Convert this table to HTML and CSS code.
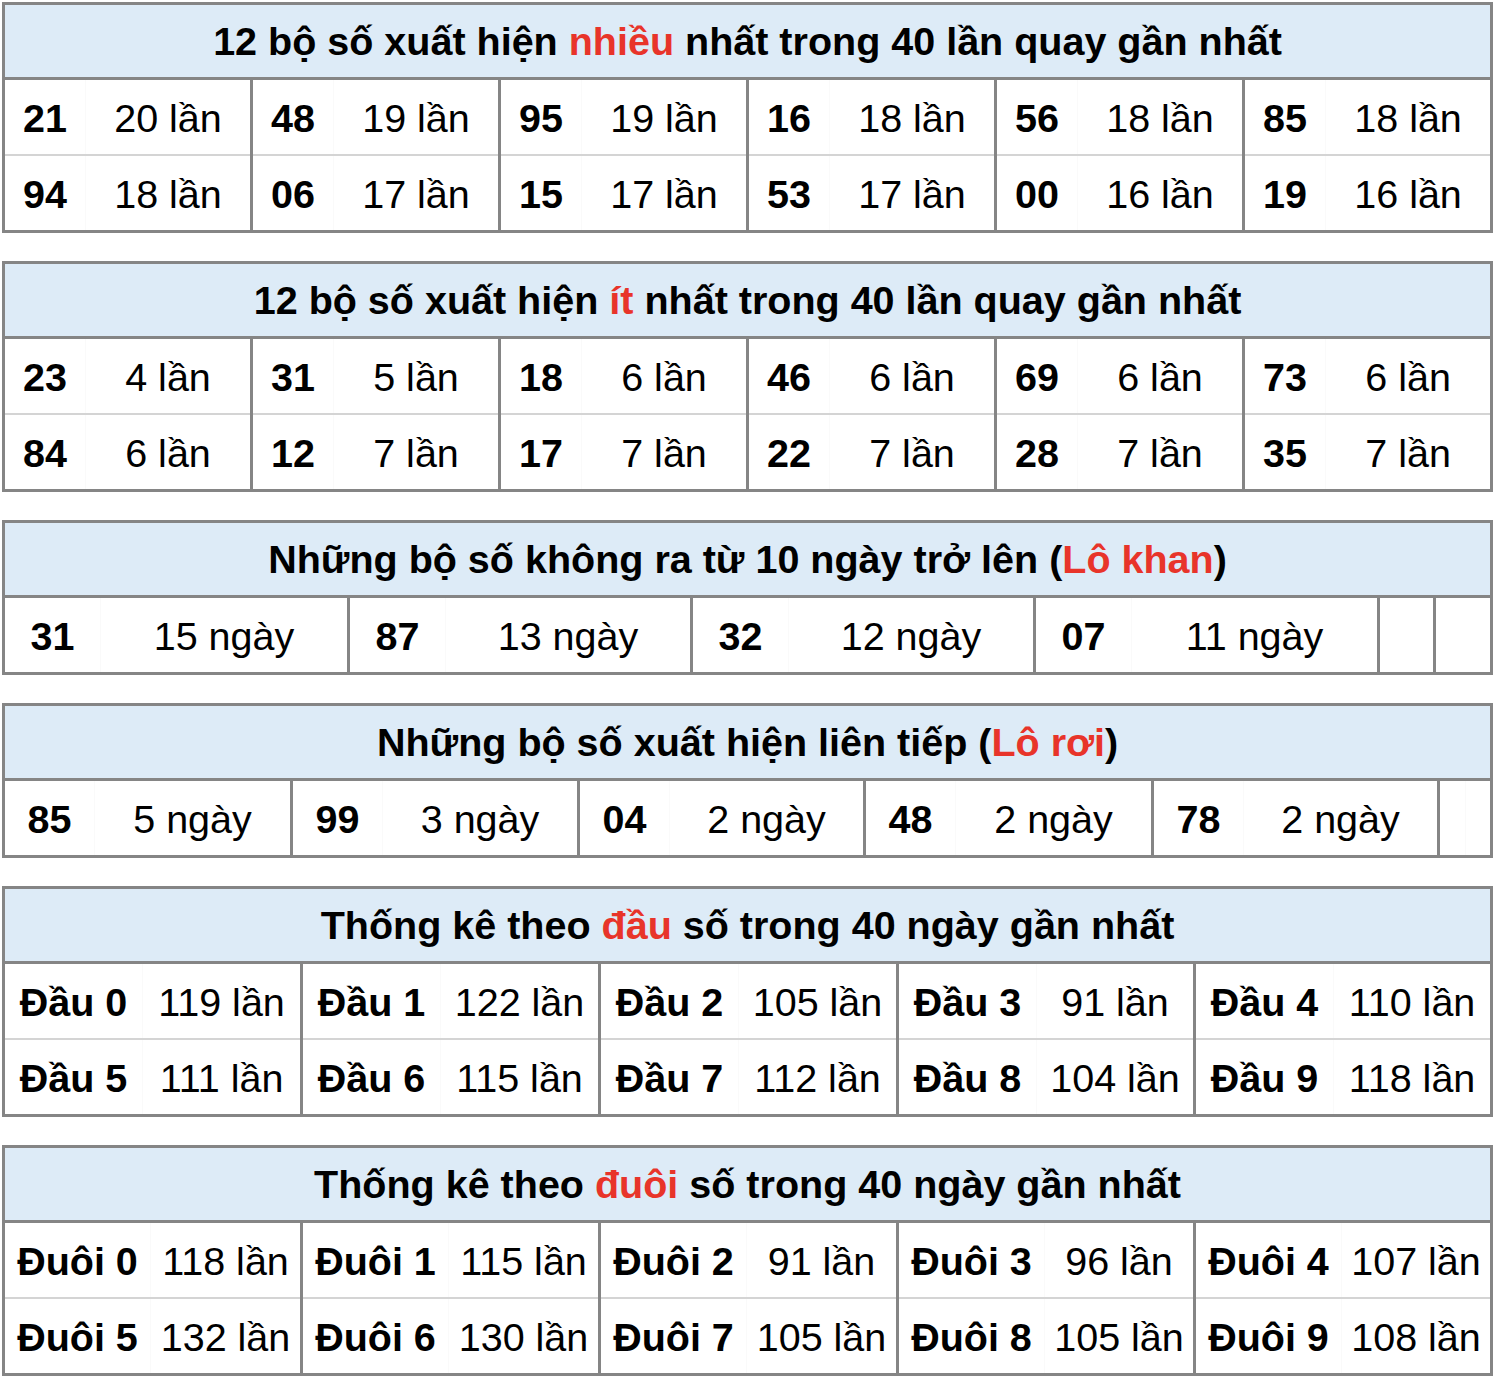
FILE: index.html
```html
<!DOCTYPE html>
<html lang="vi">
<head>
<meta charset="utf-8">
<title>Thống kê</title>
<link rel="stylesheet" href="styles.css">
</head>
<body>
<div class="wrap">

<table class="stat">
  <colgroup>
    <col class="w82"><col class="w166"><col class="w82"><col class="w166"><col class="w82"><col class="w166">
    <col class="w82"><col class="w166"><col class="w82"><col class="w166"><col class="w82"><col class="w166">
  </colgroup>
  <tr><th colspan="12">12 bộ số xuất hiện <span class="red">nhiều</span> nhất trong 40 lần quay gần nhất</th></tr>
  <tr>
    <td class="n">21</td><td class="c">20 lần</td>
    <td class="n">48</td><td class="c">19 lần</td>
    <td class="n">95</td><td class="c">19 lần</td>
    <td class="n">16</td><td class="c">18 lần</td>
    <td class="n">56</td><td class="c">18 lần</td>
    <td class="n">85</td><td class="c">18 lần</td>
  </tr>
  <tr>
    <td class="n">94</td><td class="c">18 lần</td>
    <td class="n">06</td><td class="c">17 lần</td>
    <td class="n">15</td><td class="c">17 lần</td>
    <td class="n">53</td><td class="c">17 lần</td>
    <td class="n">00</td><td class="c">16 lần</td>
    <td class="n">19</td><td class="c">16 lần</td>
  </tr>
</table>

<table class="stat">
  <colgroup>
    <col class="w82"><col class="w166"><col class="w82"><col class="w166"><col class="w82"><col class="w166">
    <col class="w82"><col class="w166"><col class="w82"><col class="w166"><col class="w82"><col class="w166">
  </colgroup>
  <tr><th colspan="12">12 bộ số xuất hiện <span class="red">ít</span> nhất trong 40 lần quay gần nhất</th></tr>
  <tr>
    <td class="n">23</td><td class="c">4 lần</td>
    <td class="n">31</td><td class="c">5 lần</td>
    <td class="n">18</td><td class="c">6 lần</td>
    <td class="n">46</td><td class="c">6 lần</td>
    <td class="n">69</td><td class="c">6 lần</td>
    <td class="n">73</td><td class="c">6 lần</td>
  </tr>
  <tr>
    <td class="n">84</td><td class="c">6 lần</td>
    <td class="n">12</td><td class="c">7 lần</td>
    <td class="n">17</td><td class="c">7 lần</td>
    <td class="n">22</td><td class="c">7 lần</td>
    <td class="n">28</td><td class="c">7 lần</td>
    <td class="n">35</td><td class="c">7 lần</td>
  </tr>
</table>

<table class="stat">
  <colgroup>
    <col class="w97"><col class="w248"><col class="w97"><col class="w246"><col class="w97"><col class="w246">
    <col class="w97"><col class="w247"><col class="w56"><col class="w57">
  </colgroup>
  <tr><th colspan="10">Những bộ số không ra từ 10 ngày trở lên (<span class="red">Lô khan</span>)</th></tr>
  <tr>
    <td class="n">31</td><td class="c">15 ngày</td>
    <td class="n">87</td><td class="c">13 ngày</td>
    <td class="n">32</td><td class="c">12 ngày</td>
    <td class="n">07</td><td class="c">11 ngày</td>
    <td class="n"></td><td class="n"></td>
  </tr>
</table>

<table class="stat">
  <colgroup>
    <col class="w91"><col class="w197"><col class="w91"><col class="w196"><col class="w91"><col class="w195">
    <col class="w91"><col class="w197"><col class="w91"><col class="w195"><col class="w27"><col class="w26">
  </colgroup>
  <tr><th colspan="12">Những bộ số xuất hiện liên tiếp (<span class="red">Lô rơi</span>)</th></tr>
  <tr>
    <td class="n">85</td><td class="c">5 ngày</td>
    <td class="n">99</td><td class="c">3 ngày</td>
    <td class="n">04</td><td class="c">2 ngày</td>
    <td class="n">48</td><td class="c">2 ngày</td>
    <td class="n">78</td><td class="c">2 ngày</td>
    <td class="n"></td><td class="c"></td>
  </tr>
</table>

<table class="stat">
  <colgroup>
    <col class="w139"><col class="w159"><col class="w139"><col class="w159"><col class="w139"><col class="w159">
    <col class="w139"><col class="w158"><col class="w139"><col class="w158">
  </colgroup>
  <tr><th colspan="10">Thống kê theo <span class="red">đầu</span> số trong 40 ngày gần nhất</th></tr>
  <tr>
    <td class="n">Đầu 0</td><td class="c">119 lần</td>
    <td class="n">Đầu 1</td><td class="c">122 lần</td>
    <td class="n">Đầu 2</td><td class="c">105 lần</td>
    <td class="n">Đầu 3</td><td class="c">91 lần</td>
    <td class="n">Đầu 4</td><td class="c">110 lần</td>
  </tr>
  <tr>
    <td class="n">Đầu 5</td><td class="c">111 lần</td>
    <td class="n">Đầu 6</td><td class="c">115 lần</td>
    <td class="n">Đầu 7</td><td class="c">112 lần</td>
    <td class="n">Đầu 8</td><td class="c">104 lần</td>
    <td class="n">Đầu 9</td><td class="c">118 lần</td>
  </tr>
</table>

<table class="stat">
  <colgroup>
    <col class="w147"><col class="w151"><col class="w147"><col class="w151"><col class="w147"><col class="w151">
    <col class="w147"><col class="w150"><col class="w147"><col class="w150">
  </colgroup>
  <tr><th colspan="10">Thống kê theo <span class="red">đuôi</span> số trong 40 ngày gần nhất</th></tr>
  <tr>
    <td class="n">Đuôi 0</td><td class="c">118 lần</td>
    <td class="n">Đuôi 1</td><td class="c">115 lần</td>
    <td class="n">Đuôi 2</td><td class="c">91 lần</td>
    <td class="n">Đuôi 3</td><td class="c">96 lần</td>
    <td class="n">Đuôi 4</td><td class="c">107 lần</td>
  </tr>
  <tr>
    <td class="n">Đuôi 5</td><td class="c">132 lần</td>
    <td class="n">Đuôi 6</td><td class="c">130 lần</td>
    <td class="n">Đuôi 7</td><td class="c">105 lần</td>
    <td class="n">Đuôi 8</td><td class="c">105 lần</td>
    <td class="n">Đuôi 9</td><td class="c">108 lần</td>
  </tr>
</table>

</div>
</body>
</html>
```

FILE: styles.css
```css
html, body {
  margin: 0;
  padding: 0;
  background: #ffffff;
}

body {
  font-family: "Liberation Sans", Arial, Helvetica, sans-serif;
  color: #000000;
}

.wrap {
  width: 1491px;
  padding: 2px 0 0 2px;
}

.stat {
  width: 1491px;
  table-layout: fixed;
  border-collapse: collapse;
  border: 3px solid #858585;
  margin: 0 0 28px 0;
  font-size: 39.5px;
}

.stat th {
  background: #ddebf7;
  border-bottom: 3px solid #858585;
  height: 72px;
  padding: 0;
  font-weight: bold;
  text-align: center;
  vertical-align: middle;
  white-space: nowrap;
}

.stat td {
  height: 72px;
  padding: 2px 0 0 0;
  text-align: center;
  vertical-align: middle;
  white-space: nowrap;
}

.stat tr + tr + tr td {
  border-top: 2px solid #d4d4d4;
}

.stat td.n {
  font-weight: bold;
  border-left: 3px solid #858585;
}

.stat td.c {
  border-left: 1px solid #fafafa;
}

.red {
  color: #e8342a;
}

.w26 { width: 26px; }
.w27 { width: 27px; }
.w56 { width: 56px; }
.w57 { width: 57px; }
.w82 { width: 82px; }
.w91 { width: 91px; }
.w97 { width: 97px; }
.w139 { width: 139px; }
.w147 { width: 147px; }
.w150 { width: 150px; }
.w151 { width: 151px; }
.w158 { width: 158px; }
.w159 { width: 159px; }
.w166 { width: 166px; }
.w195 { width: 195px; }
.w196 { width: 196px; }
.w197 { width: 197px; }
.w246 { width: 246px; }
.w247 { width: 247px; }
.w248 { width: 248px; }
```
